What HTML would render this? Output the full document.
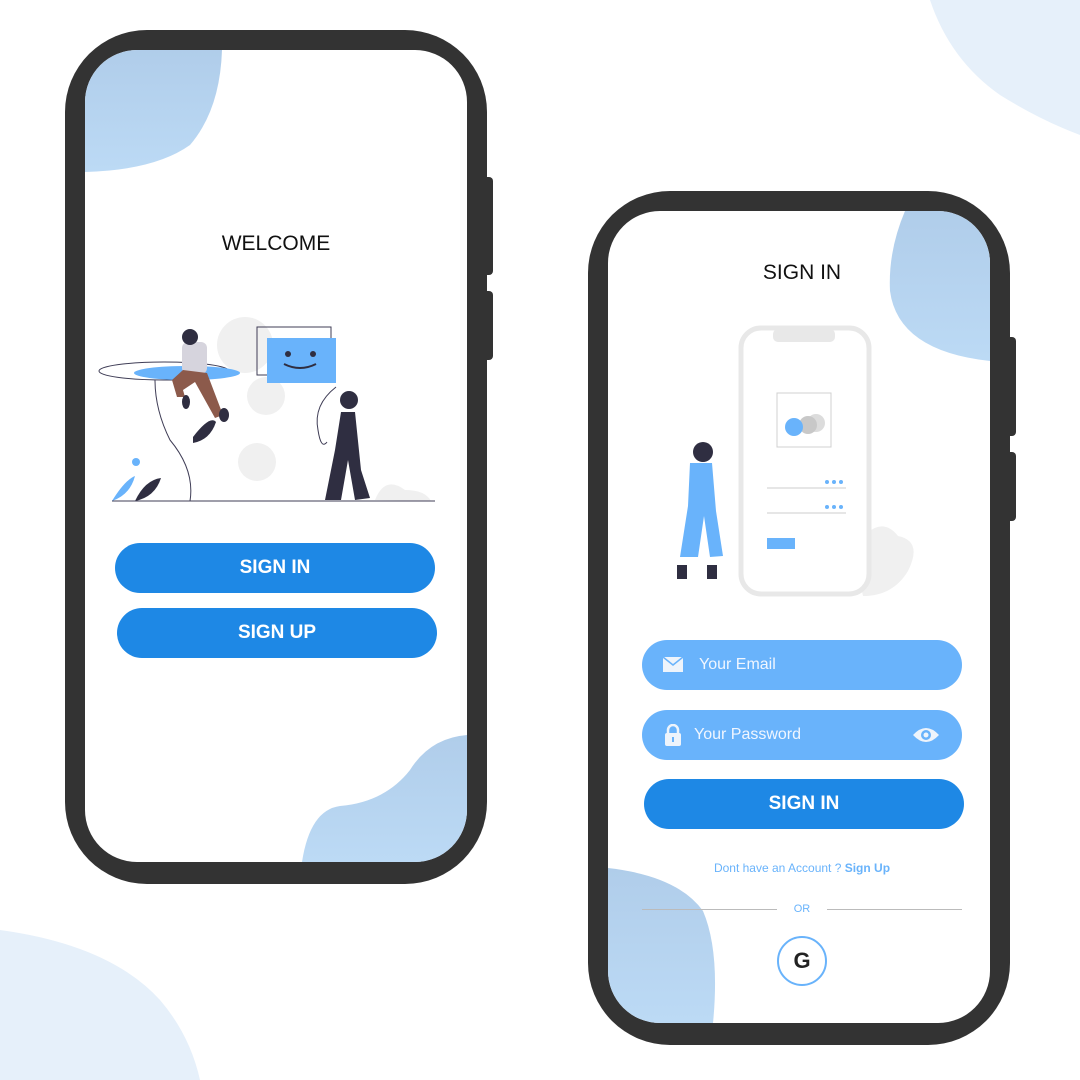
<!DOCTYPE html>
<html><head><meta charset="utf-8"><style>
*{margin:0;padding:0;box-sizing:border-box}
body{width:1080px;height:1080px;background:#fff;position:relative;overflow:hidden;font-family:"Liberation Sans",sans-serif}
.abs{position:absolute}
.phone{position:absolute;background:#333;border-radius:82px}
.screen{position:absolute;background:#fff;border-radius:52px;overflow:hidden}
.btn{position:absolute;height:50px;border-radius:25px;background:#1e88e5;color:#fff;font-weight:bold;font-size:19px;text-align:center;line-height:50px}
.inp{position:absolute;height:50px;border-radius:25px;background:#69b3fb;color:#f0f6ff;font-size:16px;line-height:50px}
</style></head><body>
<svg class="abs" style="left:0;top:0" width="1080" height="1080">
<path d="M930 0 Q950 60 1000 95 Q1040 120 1080 135 L1080 0 Z" fill="#e6f0fa"/>
<path d="M0 930 Q110 945 160 1000 Q190 1035 200 1080 L0 1080 Z" fill="#e6f0fa"/>
</svg>
<!-- phone 1 -->
<div class="abs" style="left:480px;top:177px;width:13px;height:98px;background:#333;border-radius:4px"></div>
<div class="abs" style="left:480px;top:291px;width:13px;height:69px;background:#333;border-radius:4px"></div>
<div class="phone" style="left:65px;top:30px;width:422px;height:854px"></div>
<div class="screen" style="left:85px;top:50px;width:382px;height:812px">
<svg class="abs" style="left:0;top:0" width="382" height="812">
<defs><linearGradient id="g" x1="0" y1="0" x2="0" y2="1"><stop offset="0" stop-color="#b0cdea"/><stop offset="1" stop-color="#bcdaf5"/></linearGradient></defs>
<path d="M0 0 L137 0 Q135 60 105 95 Q70 120 0 122 Z" fill="url(#g)"/>
<path d="M382 685 Q345 688 325 720 Q300 752 255 756 Q225 760 217 812 L382 812 Z" fill="url(#g)"/>
<!-- illustration -->
<g transform="translate(0,0)">
<circle cx="160" cy="295" r="28" fill="#f0f0f0"/><circle cx="181" cy="346" r="19" fill="#f0f0f0"/><circle cx="172" cy="412" r="19" fill="#f0f0f0"/>
<path d="M290 450 Q300 425 320 440 Q340 440 346 451 Z" fill="#f0f0f0"/>
<ellipse cx="79" cy="321" rx="65" ry="9" fill="none" stroke="#3f3d56" stroke-width="1"/>
<ellipse cx="102" cy="323" rx="53" ry="7" fill="#69b3fb"/>
<path d="M70 330 Q70 360 85 390 Q110 420 105 451" fill="none" stroke="#3f3d56"/>
<path d="M108 387 Q125 365 131 372 Q125 390 108 393 Z" fill="#2f2e41"/>
<rect x="172" y="277" width="74" height="48" fill="none" stroke="#3f3d56"/>
<rect x="182" y="288" width="69" height="45" fill="#69b3fb"/>
<circle cx="203" cy="304" r="3" fill="#2f2e41"/><circle cx="228" cy="304" r="3" fill="#2f2e41"/>
<path d="M199 314 Q215 322 231 314" fill="none" stroke="#2f2e41" stroke-width="2"/>
<path d="M251 337 Q228 355 233 380 Q236 400 242 392" fill="none" stroke="#3f3d56"/>
<rect x="97" y="292" width="25" height="32" rx="6" fill="#d6d4dd"/>
<circle cx="105" cy="287" r="8" fill="#2f2e41"/>
<path d="M87 330 L98 320 L122 323 L138 365 L130 368 L110 332 L98 340 L100 347 L92 347 Z" fill="#8c5a4b"/>
<ellipse cx="101" cy="352" rx="4" ry="7" fill="#2f2e41"/><ellipse cx="139" cy="365" rx="5" ry="7" fill="#2f2e41"/>
<circle cx="264" cy="350" r="9" fill="#2f2e41"/>
<path d="M256 362 L270 362 L276 420 L285 448 L270 450 L263 410 L256 450 L240 450 L250 400 Z" fill="#2f2e41"/>
<path d="M27 451 Q40 430 50 426 Q45 445 27 451 Z" fill="#69b3fb"/><circle cx="51" cy="412" r="4" fill="#69b3fb"/>
<path d="M50 451 Q60 430 76 428 Q70 447 50 451 Z" fill="#2f2e41"/>
<line x1="27" y1="451" x2="350" y2="451" stroke="#3f3d56"/>
</g>
</svg>
<div class="abs" style="left:0;width:382px;top:182px;text-align:center;font-size:21px;color:#111">WELCOME</div>
<div class="btn" style="left:30px;top:493px;width:320px">SIGN IN</div>
<div class="btn" style="left:32px;top:558px;width:320px">SIGN UP</div>
</div>
<!-- phone 2 -->
<div class="abs" style="left:1003px;top:337px;width:13px;height:99px;background:#333;border-radius:4px"></div>
<div class="abs" style="left:1003px;top:452px;width:13px;height:69px;background:#333;border-radius:4px"></div>
<div class="phone" style="left:588px;top:191px;width:422px;height:854px"></div>
<div class="screen" style="left:608px;top:211px;width:382px;height:812px">
<svg class="abs" style="left:0;top:0" width="382" height="812">
<path d="M297 0 Q280 40 282 80 Q290 140 382 150 L382 0 Z" fill="url(#g)"/>
<path d="M0 657 Q70 665 95 700 Q112 740 105 812 L0 812 Z" fill="url(#g)"/>
<path d="M245 340 Q270 300 290 325 Q315 330 300 360 Q285 385 255 385 Z" fill="#f0f0f0"/>
<rect x="133" y="117" width="128" height="266" rx="20" fill="#fff" stroke="#e8e8e8" stroke-width="5"/>
<rect x="165" y="118" width="62" height="13" rx="5" fill="#e8e8e8"/>
<rect x="169" y="182" width="54" height="54" fill="#fff" stroke="#d0d0d0"/>
<circle cx="208" cy="212" r="9" fill="#dcdcdc"/><circle cx="200" cy="214" r="9" fill="#c8c8c8"/><circle cx="186" cy="216" r="9" fill="#69b3fb"/>
<line x1="159" y1="277" x2="238" y2="277" stroke="#ccc"/><line x1="159" y1="302" x2="238" y2="302" stroke="#ccc"/>
<g fill="#69b3fb"><circle cx="219" cy="271" r="2"/><circle cx="226" cy="271" r="2"/><circle cx="233" cy="271" r="2"/><circle cx="219" cy="296" r="2"/><circle cx="226" cy="296" r="2"/><circle cx="233" cy="296" r="2"/></g>
<rect x="159" y="327" width="28" height="11" fill="#69b3fb"/>
<circle cx="95" cy="241" r="10" fill="#2f2e41"/>
<path d="M82 252 L104 252 L108 300 L115 345 L102 346 L96 305 L90 346 L72 346 L80 295 Z" fill="#69b3fb"/>
<rect x="69" y="354" width="10" height="14" fill="#2f2e41"/><rect x="99" y="354" width="10" height="14" fill="#2f2e41"/>
</svg>
<div class="abs" style="left:0;width:388px;top:50px;text-align:center;font-size:21px;color:#111">SIGN IN</div>
<div class="inp" style="left:34px;top:429px;width:320px;padding-left:57px">Your Email</div>
<svg class="abs" style="left:55px;top:446px" width="20" height="15"><rect width="20" height="15" fill="#eef4fb"/><path d="M0 0 L10 8 L20 0" fill="none" stroke="#69b3fb" stroke-width="1.5"/></svg>
<div class="inp" style="left:34px;top:499px;width:320px;padding-left:52px">Your Password</div>
<svg class="abs" style="left:57px;top:513px" width="16" height="22"><path d="M3 9 V6 A5 5 0 0 1 13 6 V9" fill="none" stroke="#eef4fb" stroke-width="2.5"/><rect x="0" y="9" width="16" height="13" rx="2" fill="#eef4fb"/><rect x="7" y="13" width="2" height="5" fill="#69b3fb"/></svg>
<svg class="abs" style="left:304px;top:515px" width="28" height="18"><path d="M1 9 Q14 -5 27 9 Q14 23 1 9 Z" fill="#eef4fb"/><circle cx="14" cy="9" r="5" fill="#69b3fb"/><circle cx="14" cy="9" r="2.5" fill="#eef4fb"/></svg>
<div class="btn" style="left:36px;top:568px;width:320px">SIGN IN</div>
<div class="abs" style="left:0;width:388px;top:650px;text-align:center;font-size:12px;color:#69b3fb">Dont have an Account ? <b>Sign Up</b></div>
<div class="abs" style="left:34px;top:698px;width:135px;height:1px;background:#bbb"></div>
<div class="abs" style="left:219px;top:698px;width:135px;height:1px;background:#bbb"></div>
<div class="abs" style="left:0;width:388px;top:692px;text-align:center;font-size:11px;color:#69b3fb">OR</div>
<div class="abs" style="left:169px;top:725px;width:50px;height:50px;border-radius:50%;border:2px solid #69b3fb;text-align:center;line-height:46px;font-weight:bold;font-size:22px;color:#222">G</div>
</div>
</body></html>
